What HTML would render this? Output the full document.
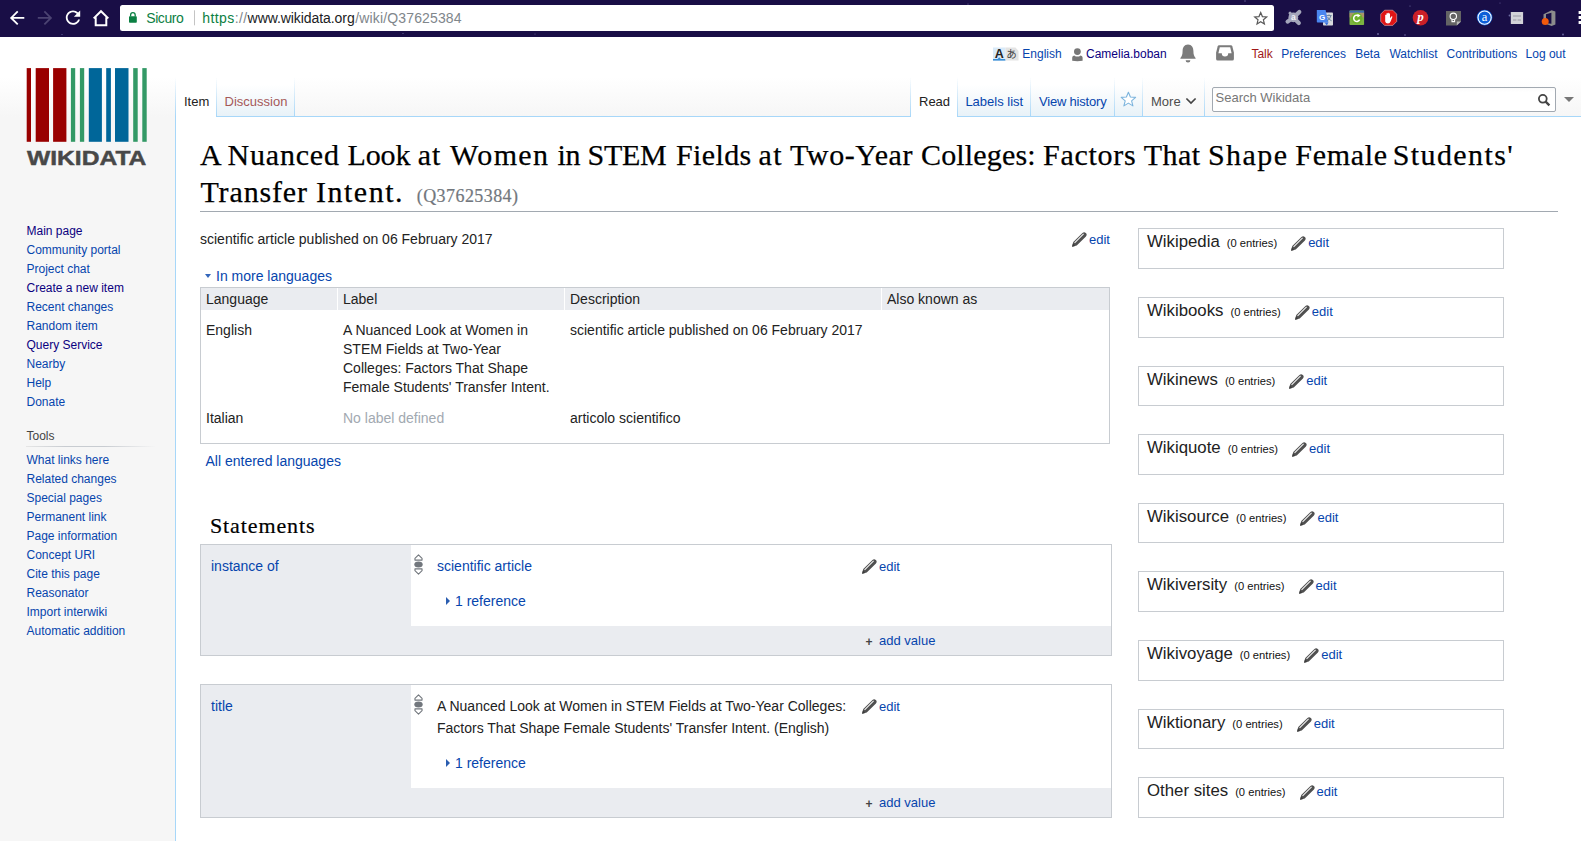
<!DOCTYPE html>
<html lang="en">
<head>
<meta charset="utf-8">
<title>A Nuanced Look at Women in STEM Fields at Two-Year Colleges - Wikidata</title>
<style>
html,body{margin:0;padding:0;}
body{width:1581px;height:841px;overflow:hidden;position:relative;background:#f6f6f6;font-family:"Liberation Sans",Arial,sans-serif;color:#222;}
a{color:#0645ad;text-decoration:none;}
a.v{color:#0b0080;}
.abs{position:absolute;}
/* ---------- browser chrome ---------- */
#chrome{position:absolute;left:0;top:0;width:1581px;height:37px;background:#190e46;}
#chromeicons{position:absolute;left:0;top:0;}
#urlbox{position:absolute;left:120px;top:5px;width:1154px;height:26px;background:#fff;border-radius:2.5px;}
#urlbox .t{position:absolute;top:0;line-height:26px;font-size:14px;white-space:nowrap;}
/* ---------- page ---------- */
#pagebase{position:absolute;left:0;top:37px;width:1581px;height:80px;background:linear-gradient(#fff 50%,#f6f6f6 100%);}
#content{position:absolute;left:175px;top:116px;width:1406px;height:730px;background:#fff;border:1px solid #a7d7f9;border-right:0;box-sizing:border-box;}
#personal{position:absolute;left:0;top:0;}
.pi{position:absolute;top:47px;font-size:12px;line-height:14px;white-space:nowrap;}
.tab{position:absolute;top:77px;height:40px;box-sizing:border-box;font-size:13px;line-height:15px;padding-top:17px;text-align:center;background:linear-gradient(#fff 0,#e8f2f8 100%);border-right:1px solid #a7d7f9;border-bottom:1px solid #a7d7f9;}
.tab.sel{background:#fff;border-bottom:0;color:#222;}
.tab.new a{color:#a55858;}
#panel a{font-size:12px;}
#panel .it{position:absolute;left:26.5px;font-size:12px;line-height:14px;white-space:nowrap;}
h1#fh{position:absolute;left:200px;top:135.5px;width:1358px;margin:0;font-family:"Liberation Serif",Georgia,serif;font-weight:normal;font-size:30px;-webkit-text-stroke:0.25px #000;line-height:37px;color:#000;border-bottom:1px solid #a2a9b1;height:75.5px;white-space:nowrap;}
h1#fh .w{position:absolute;}
h1#fh .id{font-size:18px;-webkit-text-stroke:0.2px #72777d;color:#72777d;}
.body{font-size:14px;line-height:22px;}
.edit{font-size:13px;white-space:nowrap;}
#terms{position:absolute;left:200px;top:287px;width:910px;height:157px;border:1px solid #c8ccd1;box-sizing:border-box;background:#fff;font-size:14px;}
#terms .hc{position:absolute;top:0;height:22px;line-height:22px;background:#eaecf0;padding-left:5px;box-sizing:border-box;white-space:nowrap;color:#222;}
#terms .tc{position:absolute;line-height:19px;white-space:nowrap;color:#222;}
.sg{position:absolute;left:200px;width:912px;background:#eaecf0;border:1px solid #c8ccd1;box-sizing:border-box;}
.sg .w{position:absolute;left:210px;top:0;right:0;background:#fff;}
.sl{position:absolute;left:1138px;width:366px;height:41px;border:1px solid #c8ccd1;box-sizing:border-box;background:#fff;}
.sl .h{position:absolute;left:8px;top:2px;font-size:16.8px;line-height:22px;color:#222;white-space:nowrap;}
.sl .c{font-size:11.2px;margin-left:7px;color:#111;}
.sl .e{font-size:13px;margin-left:14px;position:relative;display:inline-block;padding-left:17px;}
.sl .e svg{left:0;top:4px;}


.sg .pl{position:absolute;left:10px;top:10px;font-size:14px;line-height:22px;}
.sg .rk{position:absolute;left:212.5px;top:9px;width:9px;height:21px;}
.sg .rk svg{display:block;}
.sg .val{position:absolute;left:236px;font-size:14px;line-height:22px;white-space:nowrap;color:#222;}
.sg .ref{position:absolute;left:254px;font-size:14px;line-height:22px;white-space:nowrap;}
.sg .ref .tri{position:absolute;left:-9px;top:7px;width:0;height:0;border-left:4px solid #2a5db0;border-top:4px solid transparent;border-bottom:4px solid transparent;}
.sg .ed{position:absolute;left:661px;font-size:13px;line-height:20px;white-space:nowrap;}
.sg .ed svg,.sl svg{position:absolute;}
.sg .ed svg{left:0;top:2px;}
.sg .ed a{margin-left:17px;}
.sg .av{position:absolute;left:678px;font-size:13px;line-height:20px;white-space:nowrap;}
.sg .av .plus{position:absolute;left:-13.5px;top:1px;color:#444;font-weight:bold;font-size:12px;}

.tabbg{position:absolute;top:77px;height:39px;background:linear-gradient(#fff 0,#fff 20%,#e8f2f8 100%);}
.sep{position:absolute;top:77px;width:1px;height:40px;background:linear-gradient(rgba(167,215,249,0) 0,#a7d7f9 100%);}
.tt{position:absolute;top:94px;font-size:13px;line-height:15px;white-space:nowrap;}
</style>
</head>
<body>
<div id="chrome">
  <div id="urlbox">
    <span class="t" style="left:26.2px;color:#0b8043;letter-spacing:-0.4px;">Sicuro</span>
    <span class="t" style="left:82.3px;color:#0b8043;letter-spacing:0.4px;">https<span style="color:#80868b">://</span></span>
    <span class="t" style="left:127.6px;color:#202124;letter-spacing:-0.07px;">www.wikidata.org</span>
    <span class="t" style="left:235.3px;color:#80868b;letter-spacing:0.14px;">/wiki/Q37625384</span>
  </div>
  <svg id="chromeicons" width="1581" height="37" viewBox="0 0 1581 37">
    <!-- nav -->
    <g transform="translate(6.3 7.1) scale(0.9)" fill="#fff"><path d="M20 11H7.83l5.59-5.59L12 4l-8 8 8 8 1.41-1.41L7.83 13H20v-2z"/></g>
    <g transform="translate(34.2 7.1) scale(0.9)" fill="#4b4372"><path d="M12 4l-1.41 1.41L16.17 11H4v2h12.17l-5.58 5.59L12 20l8-8z"/></g>
    <g transform="translate(62.2 6.8) scale(0.9)" fill="#fff"><path d="M17.65 6.35C16.2 4.9 14.21 4 12 4c-4.42 0-7.99 3.58-7.99 8s3.57 8 7.99 8c3.73 0 6.84-2.55 7.73-6h-2.08c-.82 2.33-3.04 4-5.65 4-3.31 0-6-2.69-6-6s2.69-6 6-6c1.66 0 3.14.69 4.22 1.78L13 11h7V4l-2.35 2.35z"/></g>
    <path d="M93.7 18.4 L101 11.2 L108.3 18.4 M95.7 17.2 V25.3 H106.3 V17.2" fill="none" stroke="#fff" stroke-width="2"/>
    <!-- lock -->
    <rect x="129" y="16.2" width="7.8" height="6.6" rx="0.8" fill="#0b8043"/>
    <path d="M130.6 16.5 V15 a2.3 2.3 0 0 1 4.6 0 V16.5" fill="none" stroke="#0b8043" stroke-width="1.3"/>
    <rect x="194" y="10.3" width="1" height="15" fill="#c4c4c4"/>
    <!-- bookmark star -->
    <path d="M1260.7 12.6 L1262.4 16.6 L1266.7 17 L1263.4 19.8 L1264.4 24 L1260.7 21.8 L1257 24 L1258 19.8 L1254.7 17 L1259 16.6 Z" fill="none" stroke="#5a5a5a" stroke-width="1.2" stroke-linejoin="miter"/>
    <!-- ext 1: avast-like -->
    <g stroke="#a4a6bb" stroke-width="4.2" stroke-linecap="round" fill="none"><path d="M1293.3 17.6 L1299.3 12"/><path d="M1293.3 17.6 L1287.6 21.6"/><path d="M1293.3 17.6 L1298.8 23"/><path d="M1293.3 17.6 L1290 13.2" stroke-width="3"/></g>
    <circle cx="1293.3" cy="17.4" r="4.9" fill="#a4a6bb"/>
    <text x="1293.3" y="20.2" font-family="Liberation Sans, sans-serif" font-size="8.5" font-weight="bold" fill="#f2f2f7" text-anchor="middle">a</text>
    <!-- ext 2: translate -->
    <rect x="1323" y="12.6" width="10" height="13" rx="0.8" fill="#d7d9dc"/>
    <path d="M1316.8 10 H1325.6 L1328.4 22.6 H1317.6 a0.8 0.8 0 0 1 -0.8 -0.8 Z" fill="#4a86f0"/>
    <path d="M1324.6 22.6 H1328.4 L1326.8 25.6 Z" fill="#3a6fd8"/>
    <text x="1322.2" y="19.6" font-family="Liberation Sans, sans-serif" font-size="8" font-weight="bold" fill="#fff" text-anchor="middle">G</text>
    <path d="M1326.5 15.6 H1331.6 M1329 14.4 V15.6 M1327.3 20.8 Q1330.3 19 1330.8 15.8 M1327.6 17 Q1328.8 19.6 1331.6 20.8" stroke="#5b7896" stroke-width="0.9" fill="none"/>
    <!-- ext 3: green refresh -->
    <rect x="1349.5" y="10.6" width="14.6" height="14.4" rx="0.8" fill="#7cb342"/>
    <rect x="1349.5" y="10.6" width="14.6" height="2.2" fill="#3f6db0"/>
    <rect x="1349.5" y="12.8" width="14.6" height="4.6" fill="#b98a7a" opacity="0.75"/>
    <circle cx="1356.8" cy="18.2" r="5.6" fill="#6fb02c"/>
    <path d="M1359.6 19.6 a3.1 3.1 0 1 1 -1 -3.8" fill="none" stroke="#fff" stroke-width="1.5"/>
    <path d="M1357.4 13.8 L1360.6 15.6 L1357.6 17.4 Z" fill="#fff"/>
    <!-- ext 4: adblock -->
    <path d="M1384.6 10.2 H1392.8 L1396.7 14.1 V21.5 L1392.8 25.4 H1384.6 L1380.7 21.5 V14.1 Z" fill="#e01616" stroke="#f0d0d0" stroke-width="0.5"/>
    <path d="M1385.2 21.5 V15 q0.6 -0.7 1.2 0 V13.5 q0.6 -0.7 1.2 0 V13 q0.6 -0.7 1.2 0 V13.7 q0.6 -0.7 1.2 0 V18.2 l1.6 -2 q0.9 -0.2 0.8 0.8 L1390.6 21.6 q-0.8 2 -2.6 2 q-2.4 0 -2.8 -2.1 Z" fill="#fff"/>
    <!-- ext 5: pinterest -->
    <circle cx="1420.5" cy="17.7" r="7.8" fill="#cb2027"/>
    <text x="1420.6" y="20.6" font-family="Liberation Serif, serif" font-size="13" font-weight="bold" font-style="italic" fill="#fff" text-anchor="middle">p</text>
    <!-- ext 6: lightbulb -->
    <path d="M1446 11 H1461 V21.4 L1456.8 25.6 H1446 Z" fill="#646464"/>
    <path d="M1456.8 25.6 V21.4 H1461 Z" fill="#b8b8b8"/>
    <circle cx="1453.3" cy="16.3" r="3.2" fill="none" stroke="#fff" stroke-width="1.1"/>
    <path d="M1452 19.4 V21.6 H1454.6 V19.4" fill="none" stroke="#fff" stroke-width="1.1"/>
    <!-- ext 7: blue a -->
    <circle cx="1484.6" cy="17.6" r="7.8" fill="#0d5fd8"/>
    <circle cx="1484.6" cy="17.6" r="6.6" fill="none" stroke="#fff" stroke-width="1.1"/>
    <text x="1484.6" y="21.4" font-family="Liberation Serif, serif" font-size="12.5" fill="#fff" text-anchor="middle">a</text>
    <!-- ext 8: grey panel -->
    <rect x="1510.8" y="12" width="12.3" height="12" rx="0.6" fill="#d3d3d8"/>
    <rect x="1513" y="15" width="8" height="2" fill="#b6b6be"/>
    <rect x="1513" y="19" width="3.4" height="2" fill="#b6b6be"/><rect x="1517.6" y="19" width="3.4" height="2" fill="#b6b6be"/>
    <!-- ext 9: office -->
    <path d="M1543.5 14.2 L1551.6 10.2 L1555.4 11.4 V24.6 L1551.6 25.9 L1543.6 23 L1551.4 23.8 V12.8 L1546 14.2 V21.6 L1543.5 22.4 Z" fill="#8c8c8c"/>
    <circle cx="1545.2" cy="21.6" r="3.5" fill="#f25a0c"/>
    <!-- menu dots -->
    <rect x="1578.6" y="11" width="3" height="3" fill="#fff"/><rect x="1578.6" y="16" width="3" height="3" fill="#fff"/><rect x="1578.6" y="21" width="3" height="3" fill="#fff"/>
    <!-- theme stars -->
    <g fill="#6d6aa0"><circle cx="1378" cy="34" r="0.9"/><circle cx="1405" cy="35" r="0.8"/><circle cx="1509.5" cy="15.5" r="0.9"/><circle cx="1563" cy="34.5" r="0.9"/><circle cx="1245" cy="1" r="0.7"/><circle cx="1410" cy="6" r="0.6"/><circle cx="1500" cy="3" r="0.5"/><circle cx="968" cy="4" r="0.6"/><circle cx="403" cy="33.5" r="0.6"/><circle cx="535" cy="34" r="0.5"/><circle cx="62" cy="34.5" r="0.6"/></g>
  </svg>
</div>
<div id="pagebase"></div>
<div id="content"></div>

<div id="personal">
  <svg class="abs" style="left:992px;top:46px" width="28" height="16" viewBox="0 0 28 16">
    <rect x="1" y="1.5" width="12.5" height="13" fill="#d9eaf8"/>
    <rect x="1" y="13" width="12.5" height="1.6" fill="#3a8fd6"/>
    <path d="M5.6 13 L7.2 11.2 L8.8 13 Z" fill="#3a8fd6"/>
    <text x="7.2" y="12" font-family="Liberation Sans, sans-serif" font-size="12.5" font-weight="bold" fill="#222" text-anchor="middle">A</text>
    <path d="M13.5 1.5 H23.5 L26.5 5 V14.5 H13.5 Z" fill="#e4e4e4"/>
    <text x="19.6" y="12.2" font-family="Liberation Sans, Noto Sans CJK JP, sans-serif" font-size="10.5" fill="#444" text-anchor="middle">あ</text>
  </svg>
  <a class="pi" style="left:1022.3px" href="#">English</a>
  <svg class="abs" style="left:1071px;top:47px" width="13" height="15" viewBox="0 0 13 15">
    <circle cx="6.4" cy="4.6" r="3.4" fill="#777"/>
    <path d="M1.2 13.8 V10.6 Q1.2 8.6 3.2 8.4 Q6.4 10.8 9.6 8.4 Q11.6 8.6 11.6 10.6 V13.8 Q6.4 14.6 1.2 13.8 Z" fill="#777"/>
  </svg>
  <a class="pi v" style="left:1086px" href="#">Camelia.boban</a>
  <svg class="abs" style="left:1179px;top:43px" width="18" height="21" viewBox="0 0 18 21">
    <path d="M9 1.6 C5.2 1.6 3.6 4.6 3.6 8 C3.6 11.6 2.8 13.4 1.4 15 V15.8 H16.6 V15 C15.2 13.4 14.4 11.6 14.4 8 C14.4 4.6 12.800 1.6 9 1.600 Z" fill="#7b7b7b"/>
    <path d="M6.6 17.2 H11.4 A2.4 2.4 0 0 1 6.6 17.2 Z" fill="#7b7b7b"/>
  </svg>
  <svg class="abs" style="left:1215px;top:44px" width="20" height="18" viewBox="0 0 20 18">
    <path d="M4.2 1.3 H15.8 Q17 1.3 17.4 2.4 L18.9 8.400 V15 Q18.900 16.600 17.300 16.600 H2.7 Q1.100 16.600 1.100 15 V8.400 L2.600 2.400 Q3 1.300 4.200 1.300 Z" fill="#7b7b7b"/>
    <path d="M4.800 3.200 H15.200 L16.600 9.200 H13.200 A3.200 3.200 0 0 1 6.800 9.200 H3.400 Z" fill="#fff"/>
  </svg>
  <a class="pi" style="left:1251.4px;color:#a01818" href="#">Talk</a>
  <a class="pi" style="left:1281.3px" href="#">Preferences</a>
  <a class="pi" style="left:1355.2px" href="#">Beta</a>
  <a class="pi" style="left:1389.4px" href="#">Watchlist</a>
  <a class="pi" style="left:1446.6px" href="#">Contributions</a>
  <a class="pi" style="left:1525.6px" href="#">Log out</a>
</div>

<div class="tabbg" style="left:217px;width:77px;"></div>
<div class="tabbg" style="left:958px;width:72px;"></div>
<div class="tabbg" style="left:1031px;width:83px;"></div>
<div class="tabbg" style="left:1115px;width:27px;"></div>
<div class="tabbg" style="left:176px;width:40px;background:#fff;height:40px;"></div>
<div class="tabbg" style="left:911px;width:46px;background:#fff;height:40px;"></div>
<div class="sep" style="left:175px"></div><div class="sep" style="left:216px"></div><div class="sep" style="left:294px"></div>
<div class="sep" style="left:910px"></div><div class="sep" style="left:957px"></div><div class="sep" style="left:1030px"></div><div class="sep" style="left:1114px"></div><div class="sep" style="left:1142px"></div><div class="sep" style="left:1204px"></div>
<div class="tt" style="left:184px;color:#222">Item</div>
<div class="tt" style="left:224.6px"><a href="#" style="color:#a55858">Discussion</a></div>
<div class="tt" style="left:919px;color:#222">Read</div>
<div class="tt" style="left:965.4px"><a href="#">Labels list</a></div>
<div class="tt" style="left:1039px;letter-spacing:-0.2px"><a href="#">View history</a></div>
<svg class="abs" style="left:1119px;top:90px" width="19" height="18" viewBox="0 0 19 18"><path d="M9.4 2.2 L11.4 7 L16.6 7.4 L12.6 10.8 L13.9 15.900 L9.400 13.100 L4.900 15.900 L6.200 10.800 L2.200 7.400 L7.400 7 Z" fill="#fff" stroke="#7cb4dd" stroke-width="1.1" stroke-linejoin="round"/></svg>
<div class="tt" style="left:1151px;color:#4d4d4d">More</div>
<svg class="abs" style="left:1185px;top:97px" width="12" height="8" viewBox="0 0 12 8"><path d="M1.4 1.500 L6 6 L10.600 1.500" fill="none" stroke="#444" stroke-width="1.700"/></svg>

<div class="abs" style="left:1212px;top:87px;width:344px;height:25px;border:1px solid #a2a9b1;border-radius:2px;box-sizing:border-box;background:linear-gradient(#fafafa 0,#fff 4px);"></div>
<div class="abs" style="left:1215.5px;top:90px;font-size:13px;line-height:16px;color:#777;white-space:nowrap;">Search Wikidata</div>
<svg class="abs" style="left:1537px;top:93px" width="14" height="14" viewBox="0 0 14 14"><circle cx="5.800" cy="5.800" r="3.900" fill="none" stroke="#444" stroke-width="1.800"/><path d="M8.600 8.600 L12.400 12.400" stroke="#444" stroke-width="2.300"/></svg>
<div class="abs" style="left:1563.5px;top:97px;width:0;height:0;border-top:5px solid #777;border-left:5px solid transparent;border-right:5px solid transparent;"></div>

<svg class="abs" style="left:0;top:60px" width="176" height="115" viewBox="0 60 176 115">
  <g fill="#990000"><rect x="26.7" y="68.100" width="4.300" height="73.700"/><rect x="35.700" y="68.100" width="13.300" height="73.700"/><rect x="53.100" y="68.100" width="13.300" height="73.700"/></g>
  <g fill="#339966"><rect x="70.900" y="68.100" width="4.300" height="73.700"/><rect x="79.900" y="68.100" width="4.300" height="73.700"/><rect x="133.200" y="68.100" width="4.500" height="73.700"/><rect x="142.300" y="68.100" width="4.400" height="73.700"/></g>
  <g fill="#006699"><rect x="88.800" y="68.100" width="13.100" height="73.700"/><rect x="106.200" y="68.100" width="4.700" height="73.700"/><rect x="115" y="68.100" width="13.500" height="73.700"/></g>
  <text x="27" y="165" font-family="Liberation Sans, Arial, sans-serif" font-weight="bold" font-size="20.500" fill="#484848" stroke="#484848" stroke-width="0.45" textLength="119.400" lengthAdjust="spacingAndGlyphs">WIKIDATA</text>
</svg>
<div id="panel">
  <div class="it" style="top:224px"><a class="v" href="#">Main page</a></div>
  <div class="it" style="top:243px"><a href="#">Community portal</a></div>
  <div class="it" style="top:262px"><a href="#">Project chat</a></div>
  <div class="it" style="top:281px"><a class="v" href="#">Create a new item</a></div>
  <div class="it" style="top:300px"><a href="#">Recent changes</a></div>
  <div class="it" style="top:319px"><a href="#">Random item</a></div>
  <div class="it" style="top:338px"><a class="v" href="#">Query Service</a></div>
  <div class="it" style="top:357px"><a href="#">Nearby</a></div>
  <div class="it" style="top:376px"><a href="#">Help</a></div>
  <div class="it" style="top:395px"><a href="#">Donate</a></div>
  <div class="it" style="top:429px;color:#444">Tools</div>
  <div class="abs" style="left:26px;top:446px;width:130px;height:1px;background:linear-gradient(to right,#e6e6e6,#c8ccd1 30%,#c8ccd1 60%,rgba(200,204,209,0))"></div>
  <div class="it" style="top:453px"><a href="#">What links here</a></div>
  <div class="it" style="top:472px"><a href="#">Related changes</a></div>
  <div class="it" style="top:491px"><a href="#">Special pages</a></div>
  <div class="it" style="top:510px"><a href="#">Permanent link</a></div>
  <div class="it" style="top:529px"><a href="#">Page information</a></div>
  <div class="it" style="top:548px"><a href="#">Concept URI</a></div>
  <div class="it" style="top:567px"><a href="#">Cite this page</a></div>
  <div class="it" style="top:586px"><a href="#">Reasonator</a></div>
  <div class="it" style="top:605px"><a href="#">Import interwiki</a></div>
  <div class="it" style="top:624px"><a href="#">Automatic addition</a></div>
</div>

<h1 id="fh"><span class="w" style="left:0.00px;top:0px;letter-spacing:0.00px">A</span> <span class="w" style="left:27.50px;top:0px;letter-spacing:0.81px">Nuanced</span> <span class="w" style="left:147.50px;top:0px;letter-spacing:-0.11px">Look</span> <span class="w" style="left:217.75px;top:0px;letter-spacing:0.94px">at</span> <span class="w" style="left:250.00px;top:0px;letter-spacing:1.36px">Women</span> <span class="w" style="left:357.50px;top:0px;letter-spacing:-0.30px">in</span> <span class="w" style="left:387.50px;top:0px;letter-spacing:-0.28px">STEM</span> <span class="w" style="left:476.00px;top:0px;letter-spacing:0.37px">Fields</span> <span class="w" style="left:558.50px;top:0px;letter-spacing:1.50px">at</span> <span class="w" style="left:590.00px;top:0px;letter-spacing:0.62px">Two-Year</span> <span class="w" style="left:721.00px;top:0px;letter-spacing:0.16px">Colleges:</span> <span class="w" style="left:843.00px;top:0px;letter-spacing:0.73px">Factors</span> <span class="w" style="left:943.75px;top:0px;letter-spacing:0.45px">That</span> <span class="w" style="left:1008.00px;top:0px;letter-spacing:1.44px">Shape</span> <span class="w" style="left:1095.25px;top:0px;letter-spacing:0.70px">Female</span> <span class="w" style="left:1192.75px;top:0px;letter-spacing:1.39px">Students'</span> <span class="w" style="left:0.50px;top:37px;letter-spacing:0.85px">Transfer</span> <span class="w" style="left:116.00px;top:37px;letter-spacing:1.50px">Intent.</span> <span class="w id" style="left:216.75px;top:42px;letter-spacing:0.43px">(Q37625384)</span></h1>

<div class="abs body" style="left:200px;top:228px;white-space:nowrap;">scientific article published on 06 February 2017</div>
<div class="abs" style="left:1072px;top:232px;width:15px;height:15px;"><svg class="pen" width="15" height="15" viewBox="0 0 15 15"><path d="M0.1 14.7 L1.27 10.12 L10.47 0.92 A2.45 2.45 0 0 1 13.93 4.38 L4.73 13.58 Z" fill="#505050"/><path d="M2.55 10.95 L11.6 1.9" stroke="#f4f4f4" stroke-width="1.05" fill="none"/><path d="M0.1 14.7 L0.9 11.6 L3.2 13.9 Z" fill="#3c3c3c"/></svg></div>
<div class="abs edit" style="left:1089px;top:230px;line-height:20px;"><a href="#">edit</a></div>
<div class="abs" style="left:204.8px;top:274px;width:0;height:0;border-top:4.6px solid #3366bb;border-left:3.9px solid transparent;border-right:3.9px solid transparent;"></div>
<div class="abs body" style="left:216px;top:265px;white-space:nowrap;"><a href="#">In more languages</a></div>

<div id="terms">
  <div class="hc" style="left:0px;width:136px">Language</div>
  <div class="hc" style="left:137px;width:226px">Label</div>
  <div class="hc" style="left:364px;width:316px">Description</div>
  <div class="hc" style="left:681px;width:227px">Also known as</div>
  <div class="tc" style="left:5px;top:33px">English</div>
  <div class="tc" style="left:142px;top:33px">A Nuanced Look at Women in<br>STEM Fields at Two-Year<br>Colleges: Factors That Shape<br>Female Students' Transfer Intent.</div>
  <div class="tc" style="left:369px;top:33px">scientific article published on 06 February 2017</div>
  <div class="tc" style="left:5px;top:121px">Italian</div>
  <div class="tc" style="left:142px;top:121px;color:#a2a9b1">No label defined</div>
  <div class="tc" style="left:369px;top:121px">articolo scientifico</div>
</div>
<div class="abs body" style="left:205.5px;top:450px;white-space:nowrap;"><a href="#">All entered languages</a></div>

<div class="abs" style="left:209.9px;top:512px;font-family:'Liberation Serif',Georgia,serif;font-size:22px;letter-spacing:0.90px;-webkit-text-stroke:0.2px #000;line-height:28px;color:#000;">Statements</div>

<div class="sg" style="top:544px;height:112px;">
  <div class="w" style="height:81px"></div>
  <div class="pl"><a href="#">instance of</a></div>
  <div class="rk"><svg class="rank" width="9" height="21" viewBox="0 0 9 21"><path d="M0.95 6.1 L0.95 4.3 L4.5 0.9 L8.05 4.3 L8.05 6.1 Z" fill="#fff" stroke="#72777d" stroke-width="1.1" stroke-linejoin="round"/><ellipse cx="4.5" cy="10.5" rx="4.2" ry="2.95" fill="#72777d"/><path d="M0.95 14.9 L0.95 16.7 L4.5 20.1 L8.05 16.7 L8.05 14.9 Z" fill="#fff" stroke="#72777d" stroke-width="1.1" stroke-linejoin="round"/></svg></div>
  <div class="val" style="top:10px"><a href="#">scientific article</a></div>
  <div class="ref" style="top:45px"><span class="tri"></span><a href="#">1 reference</a></div>
  <div class="ed" style="top:12px"><svg class="pen" width="15" height="15" viewBox="0 0 15 15"><path d="M0.1 14.7 L1.27 10.12 L10.47 0.92 A2.45 2.45 0 0 1 13.93 4.38 L4.73 13.58 Z" fill="#505050"/><path d="M2.55 10.95 L11.6 1.9" stroke="#f4f4f4" stroke-width="1.05" fill="none"/><path d="M0.1 14.7 L0.9 11.6 L3.2 13.9 Z" fill="#3c3c3c"/></svg><a href="#">edit</a></div>
  <div class="av" style="top:86px"><span class="plus">+</span><a href="#">add value</a></div>
</div>
<div class="sg" style="top:684px;height:134px;">
  <div class="w" style="height:103px"></div>
  <div class="pl"><a href="#">title</a></div>
  <div class="rk"><svg class="rank" width="9" height="21" viewBox="0 0 9 21"><path d="M0.95 6.1 L0.95 4.3 L4.5 0.9 L8.05 4.3 L8.05 6.1 Z" fill="#fff" stroke="#72777d" stroke-width="1.1" stroke-linejoin="round"/><ellipse cx="4.5" cy="10.5" rx="4.2" ry="2.95" fill="#72777d"/><path d="M0.95 14.9 L0.95 16.7 L4.5 20.1 L8.05 16.7 L8.05 14.9 Z" fill="#fff" stroke="#72777d" stroke-width="1.1" stroke-linejoin="round"/></svg></div>
  <div class="val" style="top:10px">A Nuanced Look at Women in STEM Fields at Two-Year Colleges:<br>Factors That Shape Female Students' Transfer Intent. (English)</div>
  <div class="ref" style="top:67px"><span class="tri"></span><a href="#">1 reference</a></div>
  <div class="ed" style="top:12px"><svg class="pen" width="15" height="15" viewBox="0 0 15 15"><path d="M0.1 14.7 L1.27 10.12 L10.47 0.92 A2.45 2.45 0 0 1 13.93 4.38 L4.73 13.58 Z" fill="#505050"/><path d="M2.55 10.95 L11.6 1.9" stroke="#f4f4f4" stroke-width="1.05" fill="none"/><path d="M0.1 14.7 L0.9 11.6 L3.2 13.9 Z" fill="#3c3c3c"/></svg><a href="#">edit</a></div>
  <div class="av" style="top:108px"><span class="plus">+</span><a href="#">add value</a></div>
</div>
<div class="sl" style="top:228px"><div class="h">Wikipedia<span class="c">(0 entries)</span><span class="e"><svg class="pen" width="15" height="15" viewBox="0 0 15 15"><path d="M0.1 14.7 L1.27 10.12 L10.47 0.92 A2.45 2.45 0 0 1 13.93 4.38 L4.73 13.58 Z" fill="#505050"/><path d="M2.55 10.95 L11.6 1.9" stroke="#f4f4f4" stroke-width="1.05" fill="none"/><path d="M0.1 14.7 L0.9 11.6 L3.2 13.9 Z" fill="#3c3c3c"/></svg><a href="#">edit</a></span></div></div>
<div class="sl" style="top:297px"><div class="h">Wikibooks<span class="c">(0 entries)</span><span class="e"><svg class="pen" width="15" height="15" viewBox="0 0 15 15"><path d="M0.1 14.7 L1.27 10.12 L10.47 0.92 A2.45 2.45 0 0 1 13.93 4.38 L4.73 13.58 Z" fill="#505050"/><path d="M2.55 10.95 L11.6 1.9" stroke="#f4f4f4" stroke-width="1.05" fill="none"/><path d="M0.1 14.7 L0.9 11.6 L3.2 13.9 Z" fill="#3c3c3c"/></svg><a href="#">edit</a></span></div></div>
<div class="sl" style="top:366px;height:40px"><div class="h">Wikinews<span class="c">(0 entries)</span><span class="e"><svg class="pen" width="15" height="15" viewBox="0 0 15 15"><path d="M0.1 14.7 L1.27 10.12 L10.47 0.92 A2.45 2.45 0 0 1 13.93 4.38 L4.73 13.58 Z" fill="#505050"/><path d="M2.55 10.95 L11.6 1.9" stroke="#f4f4f4" stroke-width="1.05" fill="none"/><path d="M0.1 14.7 L0.9 11.6 L3.2 13.9 Z" fill="#3c3c3c"/></svg><a href="#">edit</a></span></div></div>
<div class="sl" style="top:434px"><div class="h">Wikiquote<span class="c">(0 entries)</span><span class="e"><svg class="pen" width="15" height="15" viewBox="0 0 15 15"><path d="M0.1 14.7 L1.27 10.12 L10.47 0.92 A2.45 2.45 0 0 1 13.93 4.38 L4.73 13.58 Z" fill="#505050"/><path d="M2.55 10.95 L11.6 1.9" stroke="#f4f4f4" stroke-width="1.05" fill="none"/><path d="M0.1 14.7 L0.9 11.6 L3.2 13.9 Z" fill="#3c3c3c"/></svg><a href="#">edit</a></span></div></div>
<div class="sl" style="top:503px;height:40px"><div class="h">Wikisource<span class="c">(0 entries)</span><span class="e"><svg class="pen" width="15" height="15" viewBox="0 0 15 15"><path d="M0.1 14.7 L1.27 10.12 L10.47 0.92 A2.45 2.45 0 0 1 13.93 4.38 L4.73 13.58 Z" fill="#505050"/><path d="M2.55 10.95 L11.6 1.9" stroke="#f4f4f4" stroke-width="1.05" fill="none"/><path d="M0.1 14.7 L0.9 11.6 L3.2 13.9 Z" fill="#3c3c3c"/></svg><a href="#">edit</a></span></div></div>
<div class="sl" style="top:571px"><div class="h">Wikiversity<span class="c">(0 entries)</span><span class="e"><svg class="pen" width="15" height="15" viewBox="0 0 15 15"><path d="M0.1 14.7 L1.27 10.12 L10.47 0.92 A2.45 2.45 0 0 1 13.93 4.38 L4.73 13.58 Z" fill="#505050"/><path d="M2.55 10.95 L11.6 1.9" stroke="#f4f4f4" stroke-width="1.05" fill="none"/><path d="M0.1 14.7 L0.9 11.6 L3.2 13.9 Z" fill="#3c3c3c"/></svg><a href="#">edit</a></span></div></div>
<div class="sl" style="top:640px"><div class="h">Wikivoyage<span class="c">(0 entries)</span><span class="e"><svg class="pen" width="15" height="15" viewBox="0 0 15 15"><path d="M0.1 14.7 L1.27 10.12 L10.47 0.92 A2.45 2.45 0 0 1 13.93 4.38 L4.73 13.58 Z" fill="#505050"/><path d="M2.55 10.95 L11.6 1.9" stroke="#f4f4f4" stroke-width="1.05" fill="none"/><path d="M0.1 14.7 L0.9 11.6 L3.2 13.9 Z" fill="#3c3c3c"/></svg><a href="#">edit</a></span></div></div>
<div class="sl" style="top:709px;height:40px"><div class="h">Wiktionary<span class="c">(0 entries)</span><span class="e"><svg class="pen" width="15" height="15" viewBox="0 0 15 15"><path d="M0.1 14.7 L1.27 10.12 L10.47 0.92 A2.45 2.45 0 0 1 13.93 4.38 L4.73 13.58 Z" fill="#505050"/><path d="M2.55 10.95 L11.6 1.9" stroke="#f4f4f4" stroke-width="1.05" fill="none"/><path d="M0.1 14.7 L0.9 11.6 L3.2 13.9 Z" fill="#3c3c3c"/></svg><a href="#">edit</a></span></div></div>
<div class="sl" style="top:777px"><div class="h">Other sites<span class="c">(0 entries)</span><span class="e"><svg class="pen" width="15" height="15" viewBox="0 0 15 15"><path d="M0.1 14.7 L1.27 10.12 L10.47 0.92 A2.45 2.45 0 0 1 13.93 4.38 L4.73 13.58 Z" fill="#505050"/><path d="M2.55 10.95 L11.6 1.9" stroke="#f4f4f4" stroke-width="1.05" fill="none"/><path d="M0.1 14.7 L0.9 11.6 L3.2 13.9 Z" fill="#3c3c3c"/></svg><a href="#">edit</a></span></div></div>
</body>
</html>
